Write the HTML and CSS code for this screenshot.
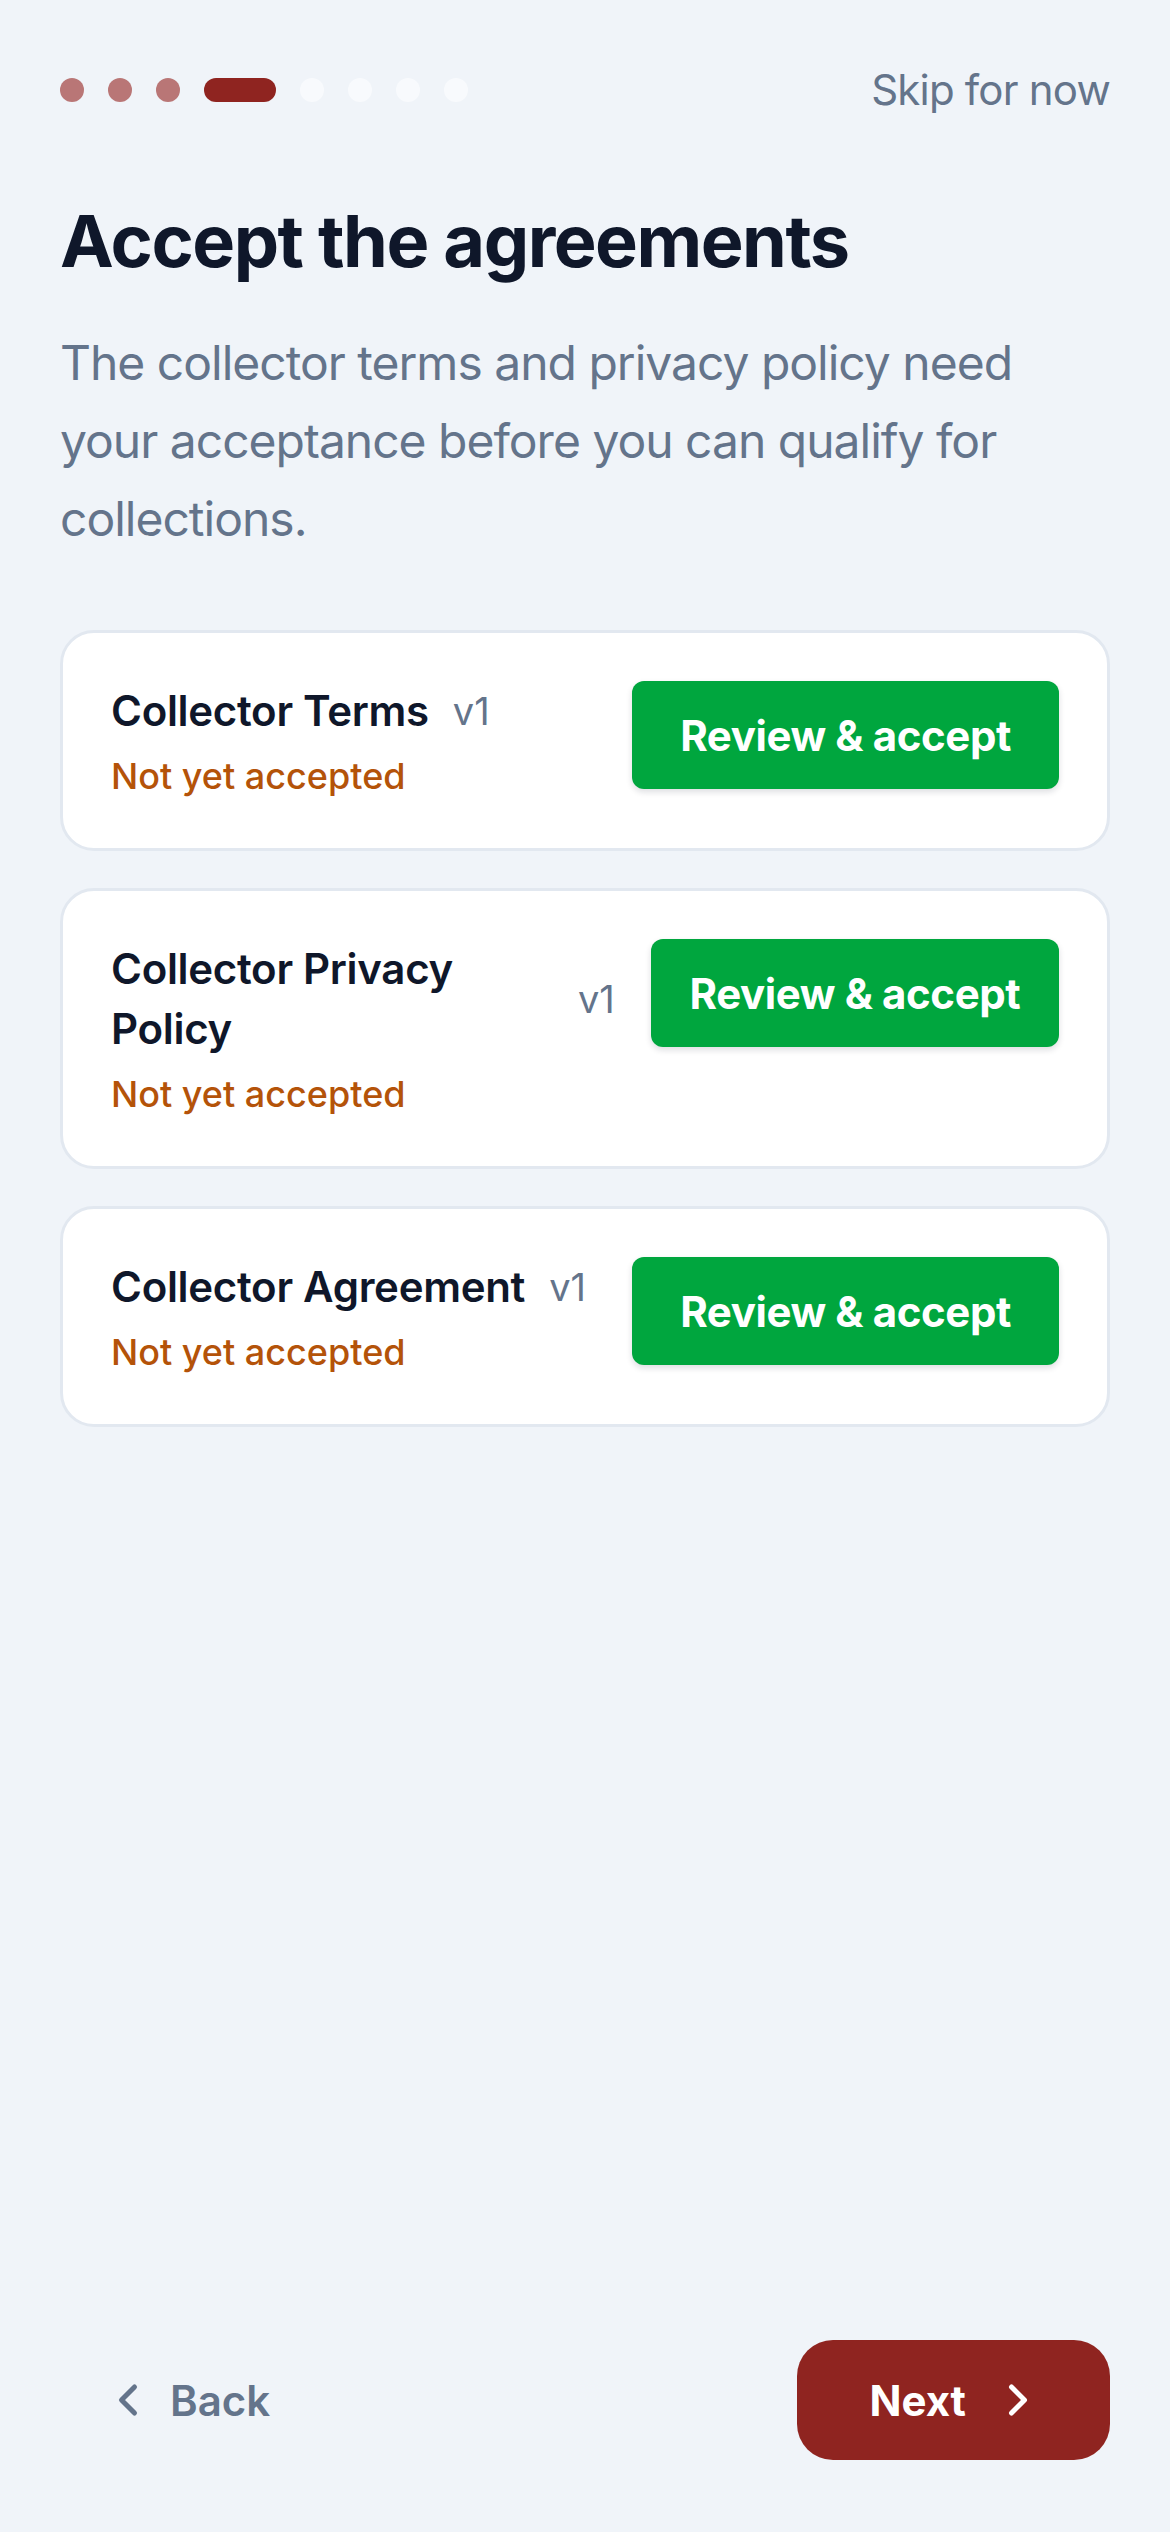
FILE: index.html
```html
<!DOCTYPE html>
<html lang="en">
<head>
<meta charset="utf-8">
<meta name="viewport" content="width=device-width, initial-scale=1">
<title>Accept the agreements</title>
<link rel="stylesheet" href="styles.css">
</head>
<body>
<div class="screen">
  <header class="topbar">
    <div class="progress" aria-label="Step 4 of 8">
      <span class="dot dot-done"></span>
      <span class="dot dot-done"></span>
      <span class="dot dot-done"></span>
      <span class="dot dot-active"></span>
      <span class="dot"></span>
      <span class="dot"></span>
      <span class="dot"></span>
      <span class="dot"></span>
    </div>
    <button class="skip" type="button">Skip for now</button>
  </header>

  <main class="content">
    <h1 class="title">Accept the agreements</h1>
    <p class="lead">The collector terms and privacy policy need your acceptance before you can qualify for collections.</p>

    <ul class="agreements">
      <li class="card">
        <div class="card-info">
          <div class="card-head">
            <span class="card-title">Collector Terms</span>
            <span class="version">v1</span>
          </div>
          <span class="status">Not yet accepted</span>
        </div>
        <button class="accept-btn" type="button"><span>Review &amp; accept</span></button>
      </li>
      <li class="card">
        <div class="card-info">
          <div class="card-head">
            <span class="card-title">Collector Privacy Policy</span>
            <span class="version">v1</span>
          </div>
          <span class="status">Not yet accepted</span>
        </div>
        <button class="accept-btn" type="button"><span>Review &amp; accept</span></button>
      </li>
      <li class="card">
        <div class="card-info">
          <div class="card-head">
            <span class="card-title">Collector Agreement</span>
            <span class="version">v1</span>
          </div>
          <span class="status">Not yet accepted</span>
        </div>
        <button class="accept-btn" type="button"><span>Review &amp; accept</span></button>
      </li>
    </ul>
  </main>

  <footer class="footer">
    <button class="back" type="button">
      <svg class="chev" viewBox="0 0 24 24" aria-hidden="true"><polyline points="15 6 9 12 15 18"/></svg>
      <span>Back</span>
    </button>
    <button class="next" type="button">
      <span>Next</span>
      <svg class="chev" viewBox="0 0 24 24" aria-hidden="true"><polyline points="9 6 15 12 9 18"/></svg>
    </button>
  </footer>
</div>
</body>
</html>
```

FILE: styles.css
```css
* {
  box-sizing: border-box;
}

html, body {
  margin: 0;
  padding: 0;
}

body {
  background: #f0f4f9;
  font-family: Inter, "Noto Sans", "Liberation Sans", sans-serif;
  color: #0f172a;
}

button {
  font-family: inherit;
  border: none;
  background: none;
  margin: 0;
  padding: 0;
  cursor: pointer;
}

.screen {
  min-height: 100vh;
  display: flex;
  flex-direction: column;
  padding: 0 60px;
}

/* Header */
.topbar {
  margin-top: 60px;
  height: 60px;
  display: flex;
  align-items: center;
  justify-content: space-between;
}

.progress {
  display: flex;
  align-items: center;
  gap: 24px;
}

.dot {
  width: 24px;
  height: 24px;
  border-radius: 12px;
  background: #f8fafd;
}

.dot-done {
  background: #b97676;
}

.dot-active {
  width: 72px;
  background: #8f2420;
}

.skip {
  font-size: 42px;
  line-height: 60px;
  font-weight: 400;
  letter-spacing: -0.8px;
  color: #64748b;
}

/* Content */
.title {
  margin: 78px 0 0;
  font-size: 72px;
  line-height: 86px;
  font-weight: 700;
  letter-spacing: -1.5px;
  color: #0f172a;
}

.lead {
  margin: 40px 0 0;
  font-size: 48px;
  line-height: 78px;
  font-weight: 400;
  letter-spacing: -1px;
  color: #64748b;
}

.agreements {
  list-style: none;
  margin: 72px 0 0;
  padding: 0;
  display: flex;
  flex-direction: column;
  gap: 37px;
}

.card {
  background: #ffffff;
  border: 3px solid #e2e8f0;
  border-radius: 34px;
  padding: 48px;
  display: flex;
  align-items: flex-start;
  gap: 36px;
}

.card-info {
  flex: 1 1 auto;
  min-width: 0;
  display: flex;
  flex-direction: column;
}

.card-head {
  display: flex;
  align-items: center;
  gap: 24px;
}

.card-title {
  min-width: 0;
  font-size: 42px;
  line-height: 60px;
  font-weight: 600;
  letter-spacing: -0.3px;
  color: #0f172a;
}

.version {
  flex: none;
  font-size: 38px;
  font-weight: 400;
  color: #64748b;
}

.status {
  margin-top: 12px;
  font-size: 36px;
  line-height: 47px;
  font-weight: 500;
  color: #b45309;
}

.accept-btn {
  flex: 0 1 auto;
  min-width: 0;
  height: 108px;
  padding: 0 48px;
  display: flex;
  align-items: center;
  justify-content: center;
  white-space: nowrap;
  background: #00a63e;
  color: #ffffff;
  font-size: 42px;
  font-weight: 700;
  letter-spacing: -0.4px;
  border-radius: 12px;
  box-shadow: 0 3px 6px rgba(15, 23, 42, 0.14);
}

/* Footer */
.footer {
  margin-top: auto;
  padding-bottom: 72px;
  display: flex;
  align-items: center;
  justify-content: space-between;
}

.chev {
  width: 52px;
  height: 52px;
  flex: none;
  fill: none;
  stroke: currentColor;
  stroke-width: 2.3;
  stroke-linecap: round;
  stroke-linejoin: round;
}

.back {
  display: flex;
  align-items: center;
  gap: 16px;
  padding-left: 42px;
  height: 120px;
  color: #64748b;
  font-size: 42px;
  font-weight: 600;
}

.next {
  display: flex;
  align-items: center;
  gap: 26px;
  height: 120px;
  padding: 0 66px 0 72px;
  background: #8f2420;
  color: #ffffff;
  font-size: 42px;
  font-weight: 700;
  border-radius: 36px;
}
```
